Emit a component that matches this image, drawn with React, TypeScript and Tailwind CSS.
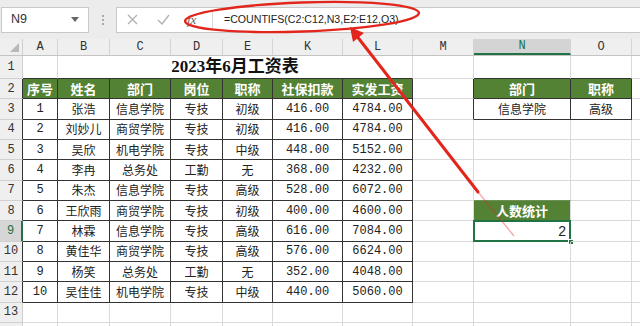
import { twMerge } from "tailwind-merge";
import type { ReactNode } from "react";

const CJK = "font-['Noto_Sans_CJK_SC',sans-serif]";
const MONO = "font-['Liberation_Mono','Noto_Sans_CJK_SC',monospace]";

const COLS = [
  { id: "A", w: "w-[35px]" },
  { id: "B", w: "w-[52px]" },
  { id: "C", w: "w-[61px]" },
  { id: "D", w: "w-[52px]" },
  { id: "E", w: "w-[50px]" },
  { id: "K", w: "w-[70px]" },
  { id: "L", w: "w-[70px]" },
  { id: "M", w: "w-[61px]" },
  { id: "N", w: "w-[97px]" },
  { id: "O", w: "w-[61px]" },
];

const HEADERS = ["序号", "姓名", "部门", "岗位", "职称", "社保扣款", "实发工资"];

const ROWS: string[][] = [
  ["1", "张浩", "信息学院", "专技", "初级", "416.00", "4784.00"],
  ["2", "刘妙儿", "商贸学院", "专技", "初级", "416.00", "4784.00"],
  ["3", "吴欣", "机电学院", "专技", "中级", "448.00", "5152.00"],
  ["4", "李冉", "总务处", "工勤", "无", "368.00", "4232.00"],
  ["5", "朱杰", "信息学院", "专技", "高级", "528.00", "6072.00"],
  ["6", "王欣雨", "商贸学院", "专技", "初级", "400.00", "4600.00"],
  ["7", "林霖", "信息学院", "专技", "高级", "616.00", "7084.00"],
  ["8", "黄佳华", "商贸学院", "专技", "高级", "576.00", "6624.00"],
  ["9", "杨笑", "总务处", "工勤", "无", "352.00", "4048.00"],
  ["10", "吴佳佳", "机电学院", "专技", "中级", "440.00", "5060.00"],
];

function Cell({ w, className = "", children }: { w: string; className?: string; children?: ReactNode }) {
  return (
    <div
      className={twMerge(
        "relative shrink-0 h-full flex items-center justify-center border-r border-b border-[#dadada] text-[12px] text-[#222]",
        w,
        className
      )}
    >
      {children}
    </div>
  );
}

function RowHead({ n, className = "" }: { n: number; className?: string }) {
  return (
    <div
      className={twMerge(
        `shrink-0 w-[23px] h-full flex items-center justify-center bg-[#efefef] border-r border-b border-[#d0d0d0] text-[12px] text-[#333] ${MONO}`,
        className
      )}
    >
      {n}
    </div>
  );
}

const DARK = "border-r-[#333] border-b-[#333]";
const GREEN = `bg-[#548235] text-white font-bold text-[13px] ${CJK}`;

function tableCell(r: number, c: number) {
  // r: 2..12, c: index 0..6 (A..L)
  if (r === 2) return { cls: `${DARK} ${GREEN}`, text: HEADERS[c] };
  const v = ROWS[r - 3][c];
  const isNum = c === 0 || c >= 5;
  return { cls: `${DARK} ${isNum ? MONO + " text-[12px]" : CJK}`, text: v };
}

function SheetRow({ r }: { r: number }) {
  const inTable = r >= 2 && r <= 12;
  return (
    <div className="flex h-[20.35px]">
      <RowHead
        n={r}
        className={twMerge(
          inTable ? "border-r-[#333]" : "",
          r === 9 ? "bg-[#d6d6d6] border-r-2 border-r-[#217346] text-[#217346]" : ""
        )}
      />
      {COLS.slice(0, 7).map((col, c) => {
        if (!inTable) return <Cell key={col.id} w={col.w} />;
        const t = tableCell(r, c);
        return (
          <Cell key={col.id} w={col.w} className={t.cls}>
            {t.text}
          </Cell>
        );
      })}
      <Cell w="w-[61px]" className={r === 2 || r === 3 ? "border-r-[#333]" : ""} />
      {r === 2 && (
        <>
          <Cell w="w-[97px]" className={`${DARK} ${GREEN}`}>部门</Cell>
          <Cell w="w-[61px]" className={`${DARK} ${GREEN}`}>职称</Cell>
        </>
      )}
      {r === 3 && (
        <>
          <Cell w="w-[97px]" className={`${DARK} ${CJK}`}>信息学院</Cell>
          <Cell w="w-[61px]" className={`${DARK} ${CJK}`}>高级</Cell>
        </>
      )}
      {r === 8 && (
        <>
          <Cell w="w-[97px]" className={GREEN}>人数统计</Cell>
          <Cell w="w-[61px]" />
        </>
      )}
      {r === 9 && (
        <>
          <Cell w="w-[97px]" className="justify-end pr-[4px] font-['Liberation_Sans',sans-serif] text-[14px]">
            2
            <div className="absolute -left-px -top-px right-[-1px] bottom-[-1px] border-2 border-[#217346]" />
            <div className="absolute right-[-4px] bottom-[-4px] w-[6px] h-[6px] bg-[#217346] border border-white" />
          </Cell>
          <Cell w="w-[61px]" />
        </>
      )}
      {![2, 3, 8, 9].includes(r) && (
        <>
          <Cell w="w-[97px]" className={r === 7 ? "border-b-[#6d8f55]" : ""} />
          <Cell w="w-[61px]" />
        </>
      )}
      <Cell w="flex-1" className="border-r-0" />
    </div>
  );
}

function FormulaBar() {
  return (
    <div className="h-[39px] bg-[#ececec] flex items-center gap-0 px-0 font-['Liberation_Sans',sans-serif]">
      <div className="ml-[1px] w-[88px] h-[26px] bg-white border border-[#c8c8c8] flex items-center justify-between px-[9px] text-[12.5px] text-[#333]">
        <span>N9</span>
        <svg width="8" height="5" viewBox="0 0 8 5">
          <path d="M0 0 L8 0 L4 5 Z" fill="#666" />
        </svg>
      </div>
      <div className="w-[27px] flex flex-col items-center gap-[2px]">
        <span className="w-[2px] h-[2px] bg-[#aaa]" />
        <span className="w-[2px] h-[2px] bg-[#aaa]" />
        <span className="w-[2px] h-[2px] bg-[#aaa]" />
      </div>
      <div className="flex-1 h-[26px] bg-white border-l border-y border-[#c8c8c8] flex items-center">
        <div className="w-[95px] flex items-center h-full">
          <svg className="ml-[10px]" width="11" height="11" viewBox="0 0 11 11">
            <path d="M1 1 L10 10 M10 1 L1 10" stroke="#b0b0b0" strokeWidth="1.3" />
          </svg>
          <svg className="ml-[19px]" width="13" height="11" viewBox="0 0 13 11">
            <path d="M1 6 L5 10 L12 1" stroke="#b0b0b0" strokeWidth="1.3" fill="none" />
          </svg>
          <span className="ml-[17px] italic text-[13px] text-[#666] font-['Liberation_Serif',serif]">fx</span>
        </div>
        <div className="w-px h-[18px] bg-[#d8d8d8]" />
        <span className="ml-[11px] text-[10.6px] text-[#222]">=COUNTIFS(C2:C12,N3,E2:E12,O3)</span>
      </div>
    </div>
  );
}

function ColumnHeader() {
  return (
    <div className={`flex h-[17px] bg-[#efefef] border-b border-[#c4c4c4] text-[12px] text-[#333] ${MONO}`}>
      <div className="relative w-[23px] shrink-0 border-r border-[#d0d0d0]">
        <svg className="absolute right-[3px] bottom-[3px]" width="9" height="9" viewBox="0 0 9 9">
          <path d="M9 0 L9 9 L0 9 Z" fill="#b9b9b9" />
        </svg>
      </div>
      {COLS.map((c) => (
        <div
          key={c.id}
          className={twMerge(
            "shrink-0 flex items-center justify-center border-r border-[#d4d4d4]",
            c.w,
            c.id === "N" ? "bg-[#d4d4d4] border-b-2 border-b-[#217346] text-[#217346]" : ""
          )}
        >
          {c.id}
        </div>
      ))}
      <div className="flex-1" />
    </div>
  );
}

function Annotation() {
  return (
    <svg className="absolute inset-0 pointer-events-none" width="640" height="326" viewBox="0 0 640 326">
      <ellipse cx="302" cy="17" rx="117" ry="14.5" transform="rotate(-2 302 17)" fill="none" stroke="#e2261c" strokeWidth="2.4" />
      <path d="M356 35 L478 192" stroke="#e2261c" strokeWidth="3" strokeLinecap="round" />
      <path d="M478 192 L514 236" stroke="#e2261c" strokeWidth="1.6" opacity="0.35" />
      <polygon points="350,27 364,33 353,42" fill="#e2261c" />
    </svg>
  );
}

export default function App() {
  return (
    <div className="relative w-[640px] h-[326px] overflow-hidden bg-white">
      <FormulaBar />
      <ColumnHeader />
      <div className="flex h-[23px]">
        <RowHead n={1} />
        <Cell w="w-[35px]" className="border-b-[#333]" />
        <Cell w="w-[355px]" className={`border-b-[#333] text-[17px] font-bold text-[#111] font-['Liberation_Serif','Noto_Sans_CJK_SC',serif]`}>
          2023年6月工资表
        </Cell>
        <Cell w="w-[61px]" />
        <Cell w="w-[97px]" className="border-b-[#333]" />
        <Cell w="w-[61px]" className="border-b-[#333]" />
        <Cell w="flex-1" className="border-r-0" />
      </div>
      {[2, 3, 4, 5, 6, 7, 8, 9, 10, 11, 12, 13, 14].map((r) => (
        <SheetRow key={r} r={r} />
      ))}
      <Annotation />
    </div>
  );
}
